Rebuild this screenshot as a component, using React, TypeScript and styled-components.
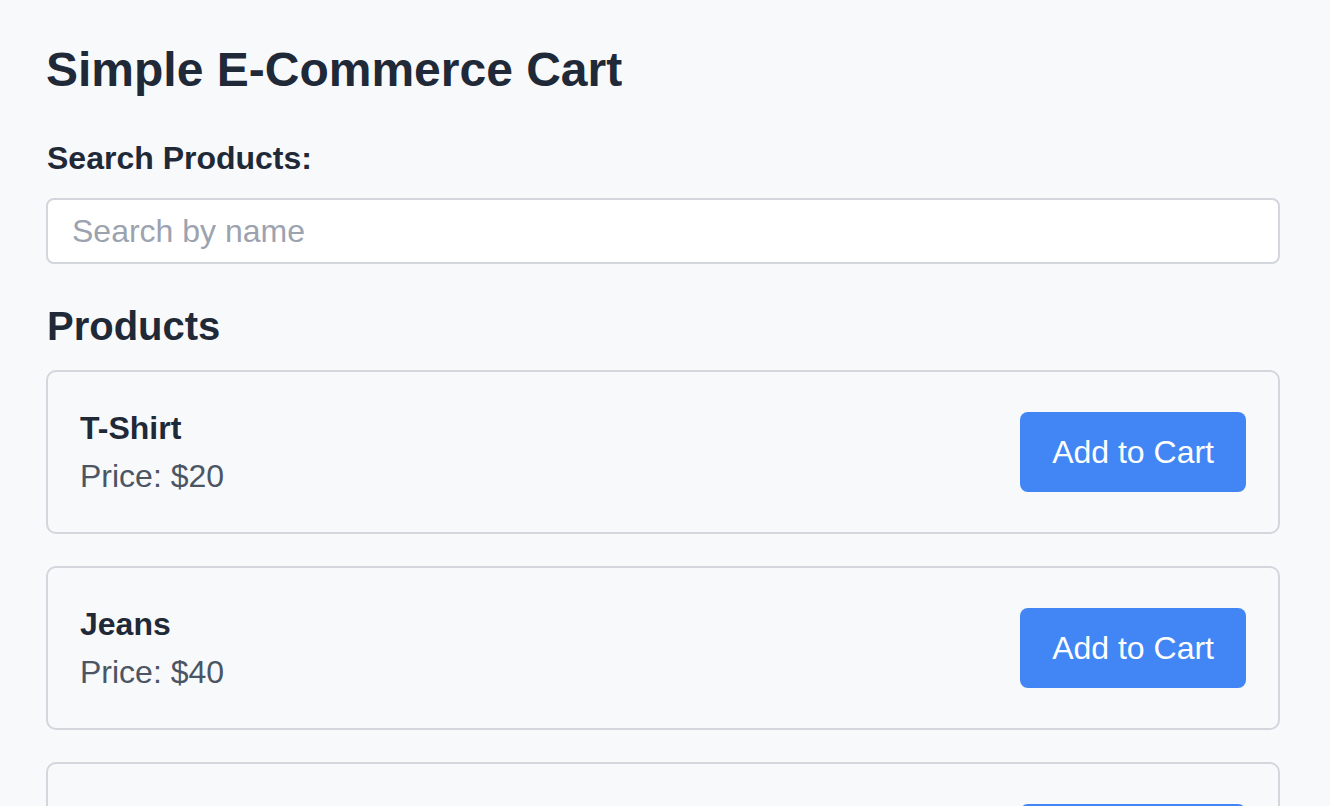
import React from "react";
import styled, { createGlobalStyle } from "styled-components";

const GlobalStyle = createGlobalStyle`
  html, body {
    margin: 0;
    padding: 0;
    background: #f8f9fb;
  }
  body {
    font-family: "Liberation Sans", Arial, Helvetica, sans-serif;
    color: #1f2937;
  }
  * { box-sizing: border-box; }
`;

const Page = styled.div`
  padding: 38px 50px 0 46px;
  display: flex;
  flex-direction: column;
`;

const Title = styled.h1`
  margin: 0 0 32px;
  font-size: 48px;
  line-height: 64px;
  font-weight: 700;
  color: #1f2937;
`;

const Label = styled.label`
  display: block;
  margin: 0 0 16px 1px;
  font-size: 32px;
  line-height: 48px;
  font-weight: 700;
  color: #1f2937;
`;

const SearchInput = styled.input`
  width: 100%;
  height: 66px;
  padding: 0 24px;
  border: 2px solid #d3d6dc;
  border-radius: 8px;
  background: #ffffff;
  font-family: "Liberation Sans", Arial, sans-serif;
  font-size: 32px;
  color: #1f2937;
  outline: none;
  &::placeholder {
    color: #9ca3af;
  }
`;

const SectionTitle = styled.h2`
  margin: 34px 0 16px 1px;
  font-size: 40px;
  line-height: 56px;
  font-weight: 700;
  color: #1f2937;
`;

const ProductList = styled.div`
  display: flex;
  flex-direction: column;
  gap: 32px;
`;

const Card = styled.div`
  display: flex;
  align-items: center;
  justify-content: space-between;
  padding: 32px;
  border: 2px solid #d3d6dc;
  border-radius: 10px;
  background: #f8f9fb;
`;

const Info = styled.div`
  display: flex;
  flex-direction: column;
`;

const Name = styled.div`
  font-size: 32px;
  line-height: 48px;
  font-weight: 700;
  color: #1f2937;
`;

const Price = styled.div`
  font-size: 32px;
  line-height: 48px;
  color: #4b5563;
`;

const AddButton = styled.button`
  padding: 16px 32px;
  border: none;
  border-radius: 8px;
  background: #4286f5;
  color: #ffffff;
  font-family: "Liberation Sans", Arial, sans-serif;
  font-size: 32px;
  line-height: 48px;
  cursor: pointer;
`;

const products = [
  { id: 1, name: "T-Shirt", price: 20 },
  { id: 2, name: "Jeans", price: 40 },
  { id: 3, name: "Sneakers", price: 60 },
];

export default function App() {
  return (
    <>
      <GlobalStyle />
      <Page>
        <Title>Simple E-Commerce Cart</Title>
        <Label htmlFor="search">Search Products:</Label>
        <SearchInput id="search" placeholder="Search by name" />
        <SectionTitle>Products</SectionTitle>
        <ProductList>
          {products.map((p) => (
            <Card key={p.id}>
              <Info>
                <Name>{p.name}</Name>
                <Price>Price: ${p.price}</Price>
              </Info>
              <AddButton>Add to Cart</AddButton>
            </Card>
          ))}
        </ProductList>
      </Page>
    </>
  );
}
